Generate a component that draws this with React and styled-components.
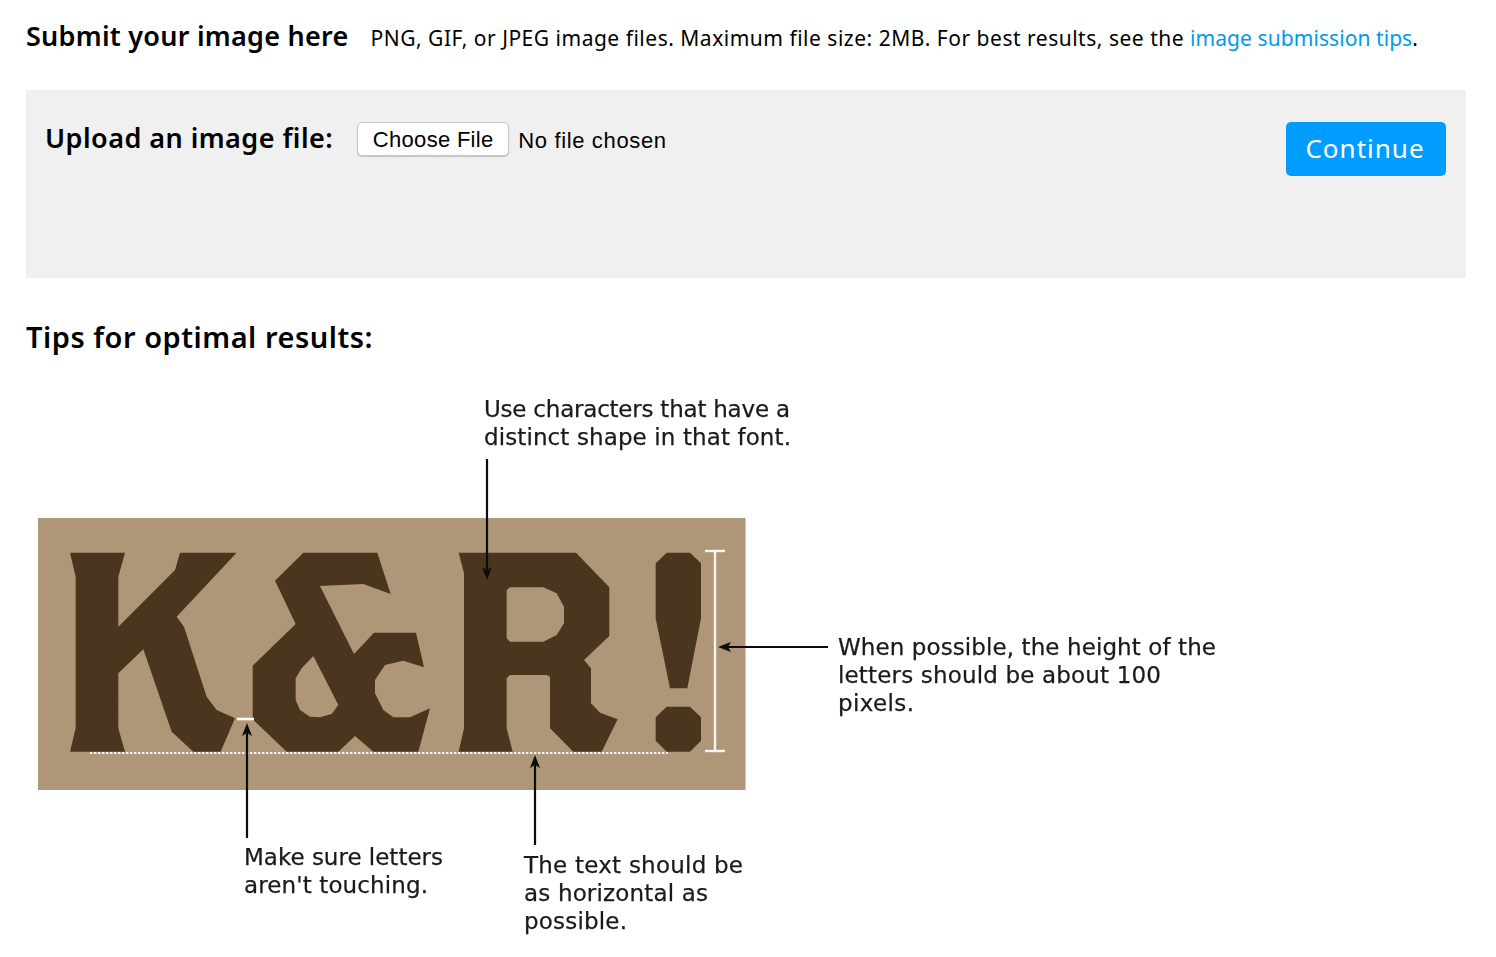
import React from 'react';
import styled, { createGlobalStyle } from 'styled-components';

const Global = createGlobalStyle`
  html, body { margin: 0; padding: 0; background: #fff; }
  body { font-family: "Noto Sans", "Open Sans", sans-serif; color: #000; }
`;

const Page = styled.main`
  width: 1496px;
  height: 957px;
  box-sizing: border-box;
  padding: 16px 30px 0 26px;
  overflow: hidden;
`;
const IntroRow = styled.header`
  display: flex;
  align-items: baseline;
  gap: 22px;
  height: 74px;
  white-space: nowrap;
`;
const Title = styled.h1`
  margin: 0;
  font-size: 27px;
  line-height: 40px;
  font-weight: 600;
  letter-spacing: 0.25px;
`;
const Hint = styled.p`
  margin: 1px 0 0;
  font-size: 21px;
  line-height: 40px;
  letter-spacing: 0.51px;
`;
const TipLink = styled.a`
  color: #0099f0;
  text-decoration: none;
  letter-spacing: 0.07px;
`;
const UploadPanel = styled.section`
  display: flex;
  align-items: flex-start;
  height: 188px;
  box-sizing: border-box;
  padding: 32px 20px 0 19px;
  background: #f0f0f0;
`;
const UploadLabel = styled.label`
  font-size: 27px;
  line-height: 32px;
  font-weight: 600;
  letter-spacing: 0.45px;
  margin-right: 24px;
  white-space: nowrap;
`;
const FileButton = styled.button`
  width: 152px;
  height: 34px;
  padding: 2px 0 0;
  background: #fff;
  border: 1px solid #c4c4c4;
  border-radius: 5px;
  box-shadow: 0 1px 1px rgba(0, 0, 0, 0.18);
  color: #000;
  font-family: "Liberation Sans", Arial, sans-serif;
  font-size: 22px;
  letter-spacing: 0.3px;
`;
const FileStatus = styled.span`
  margin-left: 9px;
  font-family: "Liberation Sans", Arial, sans-serif;
  font-size: 22px;
  line-height: 37px;
  letter-spacing: 0.65px;
  flex: 1;
`;
const ContinueButton = styled.button`
  width: 160px;
  height: 54px;
  padding: 0 2px 2px 0;
  border: 0;
  border-radius: 5px;
  background: #009dff;
  color: #fff;
  font-family: "Noto Sans", sans-serif;
  font-size: 26px;
  letter-spacing: 1px;
`;
const TipsTitle = styled.h2`
  margin: 37px 0 0;
  font-size: 29px;
  line-height: 44px;
  font-weight: 600;
  letter-spacing: 0.52px;
`;
const Figure = styled.svg`
  display: block;
  margin-top: 21px;
  overflow: visible;
  filter: blur(0.35px);
`;
const Callout = styled.text`
  font-family: "DejaVu Sans", sans-serif;
  font-size: 23px;
  fill: #1a1a1a;
  stroke: #1a1a1a;
  stroke-width: 0.25px;
`;

const z2 = (s) => s.split(' ').map((p) => { const [x, y] = p.split(','); return `${30 + x / 3},${510 + y / 3}`; }).join(' ');
const z3 = (s) => s.split(' ').map((p) => { const [x, y] = p.split(','); return `${400 + x / 3},${510 + y / 3}`; }).join(' ');
const path = (pts) => `M${pts.replace(/ /g, 'L')}Z`;

const K = z2('120,128 285,128 265,200 265,350 435,180 450,128 620,128 440,320 462,350 530,560 560,600 615,625 572,725 490,725 425,665 340,418 265,490 265,655 285,725 120,725 137,655 137,200');
const Amp = z2('820,128 1042,128 1082,252 1000,222 870,228 972,432 1032,368 1158,368 1182,472 1120,452 1065,465 1035,510 1035,550 1060,600 1090,622 1140,622 1200,595 1165,725 1030,725 975,678 925,725 770,725 668,628 668,467 797,342 735,212');
const AmpHole = z2('850,438 925,585 905,612 870,622 840,620 810,600 797,570 797,505 815,475');
const R = z3('176,128 528,128 628,232 628,378 552,450 573,475 573,580 600,608 653,628 605,725 520,725 450,655 450,500 440,495 330,495 320,505 320,655 338,725 176,725 192,655 192,190');
const RHole = z3('330,232 430,232 470,250 492,290 492,340 470,375 430,395 330,395 320,385 320,240');
const Bang = z3('800,128 870,128 903,160 903,325 862,535 810,535 767,325 767,160');
const Dot = z3('800,590 870,590 903,622 903,692 870,725 800,725 767,692 767,622');

const INK = '#4a361f';
const ARROW = '#0c0c0c';
const CHALK = '#f8f4ef';

function Arrow({ x1, y1, x2, y2 }) {
  const dx = Math.sign(x2 - x1);
  const dy = Math.sign(y2 - y1);
  const head = dy
    ? `${x2},${y2} ${x2 - 5},${y2 - dy * 13} ${x2},${y2 - dy * 10} ${x2 + 5},${y2 - dy * 13}`
    : `${x2},${y2} ${x2 - dx * 13},${y2 - 5} ${x2 - dx * 10},${y2} ${x2 - dx * 13},${y2 + 5}`;
  return (
    <g>
      <line x1={x1} y1={y1} x2={x2 - dx * 8} y2={y2 - dy * 8} stroke={ARROW} strokeWidth="2.2" />
      <polygon points={head} fill={ARROW} />
    </g>
  );
}

function Lines({ x, y, lines }) {
  return lines.map(([t, w], i) => (
    <Callout key={t} x={x} y={y + i * 28} textLength={w} lengthAdjust="spacing">{t}</Callout>
  ));
}

function Diagram() {
  return (
    <Figure width="1240" height="570" viewBox="26 380 1240 570" role="img" aria-label="Tips diagram">
      <rect x="38" y="518" width="707.5" height="272" fill="#b09678" />
      <polygon points={K} fill={INK} />
      <path d={path(Amp) + path(AmpHole)} fill={INK} fillRule="evenodd" />
      <path d={path(R) + path(RHole)} fill={INK} fillRule="evenodd" />
      <polygon points={Bang} fill={INK} />
      <polygon points={Dot} fill={INK} />
      <line x1="90" y1="753" x2="668" y2="753" stroke={CHALK} strokeWidth="2.2" strokeDasharray="2.4 1.6" />
      <line x1="237" y1="719" x2="254" y2="719" stroke="#fff" strokeWidth="2.6" />
      <line x1="715" y1="551" x2="715" y2="751" stroke={CHALK} strokeWidth="2.4" />
      <line x1="705" y1="551" x2="725" y2="551" stroke={CHALK} strokeWidth="2.4" />
      <line x1="705" y1="751" x2="725" y2="751" stroke={CHALK} strokeWidth="2.4" />
      <Arrow x1={487} y1={459} x2={487} y2={580} />
      <Arrow x1={247} y1={838} x2={247} y2={723} />
      <Arrow x1={535} y1={845} x2={535} y2={755} />
      <Arrow x1={828} y1={647} x2={718} y2={647} />
      <Lines x={484} y={417} lines={[['Use characters that have a', 306], ['distinct shape in that font.', 307]]} />
      <Lines x={838} y={655} lines={[['When possible, the height of the', 378], ['letters should be about 100', 323], ['pixels.', 76]]} />
      <Lines x={244} y={865} lines={[['Make sure letters', 199], ["aren't touching.", 184]]} />
      <Lines x={524} y={873} lines={[['The text should be', 219], ['as horizontal as', 184], ['possible.', 103]]} />
    </Figure>
  );
}

export default function App() {
  return (
    <Page>
      <Global />
      <IntroRow>
        <Title>Submit your image here</Title>
        <Hint>
          PNG, GIF, or JPEG image files. Maximum file size: 2MB. For best results, see the{' '}
          <TipLink href="#tips">image submission tips</TipLink>.
        </Hint>
      </IntroRow>
      <UploadPanel>
        <UploadLabel>Upload an image file:</UploadLabel>
        <FileButton type="button">Choose File</FileButton>
        <FileStatus>No file chosen</FileStatus>
        <ContinueButton type="button">Continue</ContinueButton>
      </UploadPanel>
      <TipsTitle>Tips for optimal results:</TipsTitle>
      <Diagram />
    </Page>
  );
}
